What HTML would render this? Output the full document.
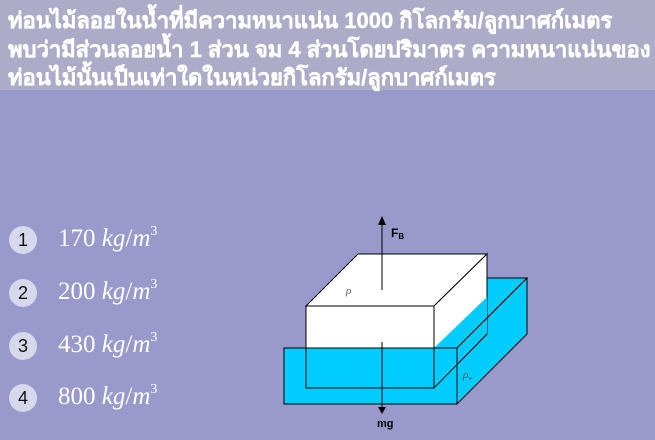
<!DOCTYPE html>
<html><head><meta charset="utf-8"><style>
body{margin:0;width:655px;height:440px;background:#9999cc;position:relative;overflow:hidden;font-family:"Liberation Sans",sans-serif}
.hd{position:absolute;left:0;top:0;width:655px;height:90px;background:#acacc8}
.hd div{position:absolute;left:8px;color:#fff;font-weight:bold;font-size:22px;white-space:nowrap;font-family:"Liberation Sans","Noto Sans CJK SC",sans-serif;-webkit-text-stroke:0.4px #fff}
.c{position:absolute;left:9px;width:28px;height:28px;border-radius:50%;background:#d8d8ec;color:#111;font-size:18px;text-align:center;line-height:28px}
.o{position:absolute;left:58px;color:#fff;font-family:"Liberation Serif",serif;font-size:25px;white-space:nowrap}
.o i{font-size:25px}.o sup{font-size:14px;vertical-align:11px}
</style></head><body>
<div class="hd">
<div style="top:3px">ท่อนไม้ลอยในน้ำที่มีความหนาแน่น 1000 กิโลกรัม/ลูกบาศก์เมตร</div>
<div style="top:32px">พบว่ามีส่วนลอยน้ำ 1 ส่วน จม 4 ส่วนโดยปริมาตร ความหนาแน่นของ</div>
<div style="top:60px">ท่อนไม้นั้นเป็นเท่าใดในหน่วยกิโลกรัม/ลูกบาศก์เมตร</div>
</div>
<div class="c" style="top:226px">1</div><div class="o" style="top:224px">170 <i>kg</i>/<i>m</i><sup>3</sup></div>
<div class="c" style="top:279px">2</div><div class="o" style="top:277px">200 <i>kg</i>/<i>m</i><sup>3</sup></div>
<div class="c" style="top:332px">3</div><div class="o" style="top:330px">430 <i>kg</i>/<i>m</i><sup>3</sup></div>
<div class="c" style="top:384px">4</div><div class="o" style="top:382px">800 <i>kg</i>/<i>m</i><sup>3</sup></div>
<svg width="655" height="440" style="position:absolute;left:0;top:0">
<g stroke="#000" stroke-width="1">
<polygon points="457,348 527,278 527,334 457,404" fill="#00ccff"/>
<polygon points="486,278 527,278 457,348 436,348" fill="#00ccff" stroke="none"/>
<line x1="486" y1="278" x2="527" y2="278"/>
<polygon points="306,306 358,254 487,254 434,306" fill="#fff"/>
<polygon points="434,306 487,254 487,334 434,388" fill="#fff"/>
<polygon points="434,348 487,297 487,334 434,388" fill="#00ccff" stroke="none"/>
<rect x="306" y="306" width="128" height="82" fill="#fff"/>
<rect x="284" y="348" width="173" height="56" fill="#00ccff"/>
<line x1="284" y1="348" x2="457" y2="348" stroke-dasharray="5,3"/>
<line x1="457" y1="348" x2="527" y2="278"/>
<polyline points="306,348 306,388 434,388 434,348" fill="none"/>
<line x1="434" y1="388" x2="487" y2="334"/>
<line x1="434" y1="348" x2="434" y2="306"/>
<line x1="382" y1="224" x2="382" y2="290"/>
<line x1="382" y1="342" x2="382" y2="408"/>
</g>
<polygon points="378,225 382,216 386,225" fill="#000"/>
<polygon points="378,407 382,414 386,407" fill="#000"/>
<text x="391" y="237" font-family="Liberation Sans" font-weight="bold" font-size="12">F<tspan font-size="8" dy="2">B</tspan></text>
<text x="377" y="427" font-family="Liberation Sans" font-weight="bold" font-size="11">mg</text>
<text x="346" y="294" font-family="Liberation Serif" font-style="italic" font-size="11" fill="#555">ρ</text>
<text x="463" y="378" font-family="Liberation Serif" font-style="italic" font-size="11" fill="#555">ρ<tspan font-size="6" dy="2">w</tspan></text>
</svg>
</body></html>
